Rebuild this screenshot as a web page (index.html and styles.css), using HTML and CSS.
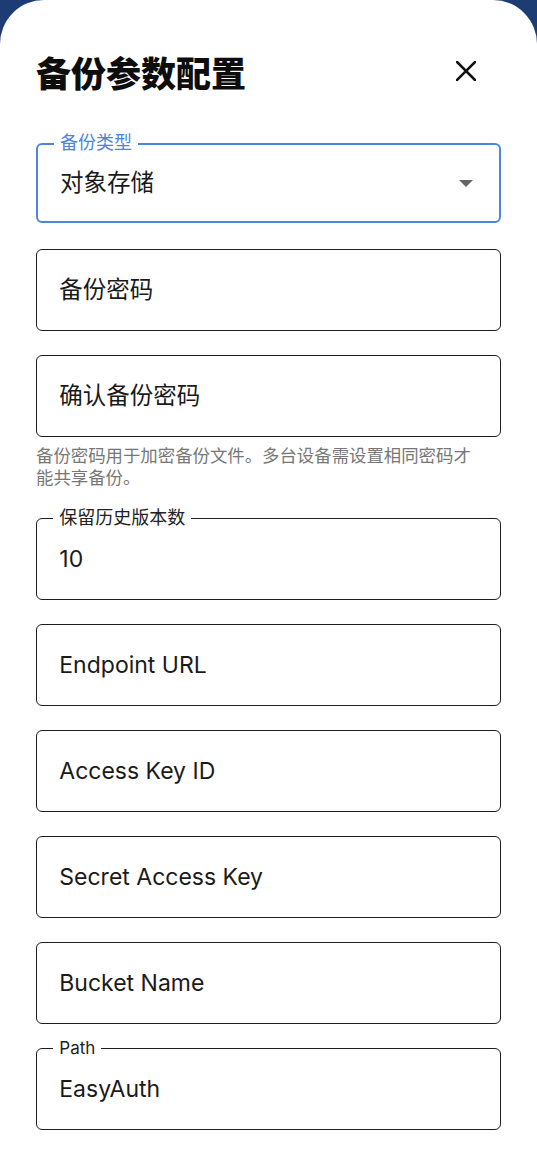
FILE: index.html
```html
<!DOCTYPE html>
<html lang="zh-CN">
<head>
<meta charset="utf-8">
<title>备份参数配置</title>
<link rel="stylesheet" href="styles.css">
</head>
<body>
<div class="sheet">
  <div class="header">
    <h1 class="title">备份参数配置</h1>
    <button class="close" aria-label="关闭">
      <svg viewBox="0 0 20 20" width="20" height="20"><path d="M1 1 L19 19 M19 1 L1 19" stroke="#111" stroke-width="2.5" stroke-linecap="square" fill="none"/></svg>
    </button>
  </div>
  <div class="form">
    <div class="field focused">
      <span class="label zh">备份类型</span>
      <span class="value zh">对象存储</span>
      <span class="caret"></span>
    </div>
    <div class="field">
      <span class="placeholder zh">备份密码</span>
    </div>
    <div class="group">
      <div class="field">
        <span class="placeholder zh">确认备份密码</span>
      </div>
      <p class="helper">备份密码用于加密备份文件。多台设备需设置相同密码才能共享备份。</p>
    </div>
    <div class="field">
      <span class="label zh">保留历史版本数</span>
      <span class="value">10</span>
    </div>
    <div class="field">
      <span class="placeholder">Endpoint URL</span>
    </div>
    <div class="field">
      <span class="placeholder">Access Key ID</span>
    </div>
    <div class="field">
      <span class="placeholder">Secret Access Key</span>
    </div>
    <div class="field">
      <span class="placeholder">Bucket Name</span>
    </div>
    <div class="field">
      <span class="label">Path</span>
      <span class="value">EasyAuth</span>
    </div>
  </div>
</div>
</body>
</html>
```
FILE: styles.css
```css
html, body {
  margin: 0;
  padding: 0;
  background: #1d3c74;
}
body {
  font-family: Inter, "Noto Sans CJK SC", sans-serif;
  color: #1a1a1a;
}
.sheet {
  background: #fff;
  border-radius: 44px 44px 0 0;
  min-height: 1169px;
  box-sizing: border-box;
  padding: 36px 36px 0 36px;
}
.header {
  height: 70px;
  display: flex;
  align-items: center;
  justify-content: space-between;
}
.title {
  margin: 0;
  font-family: "Noto Sans CJK SC", sans-serif;
  font-size: 35px;
  line-height: 1;
  font-weight: 900;
  color: #0d0d0d;
}
.close {
  border: 0;
  background: none;
  padding: 0;
  margin-right: 25px;
  width: 20px;
  height: 20px;
  display: flex;
}
.form {
  margin-top: 37px;
  display: flex;
  flex-direction: column;
  gap: 24px;
}
.group {
  display: flex;
  flex-direction: column;
}
.field {
  position: relative;
  box-sizing: border-box;
  height: 82px;
  border: 1.7px solid #1e1e1e;
  border-radius: 6px;
  display: flex;
  align-items: center;
  padding: 0 23px 0 22.3px;
}
.field.focused {
  height: 80px;
  border: 2px solid #4a86e0;
  padding-left: 22px;
}
.group + .field {
  margin-top: 0;
}
.label {
  position: absolute;
  top: -11px;
  left: 16.3px;
  padding: 0 6px;
  background: #fff;
  font-size: 17px;
  line-height: 20px;
  color: #222;
}
.label.zh {
  font-size: 18px;
}
.focused .label {
  left: 16px;
  top: -12px;
  color: #4a86e0;
}
.focused + .field {
  margin-top: 2px;
}
.value, .placeholder {
  font-size: 23px;
  line-height: 28px;
  color: #1a1a1a;
}
.value.zh, .placeholder.zh {
  font-size: 23.5px;
}
.caret {
  margin-left: auto;
  margin-right: 3px;
  width: 0;
  height: 0;
  border-left: 7.5px solid transparent;
  border-right: 7.5px solid transparent;
  border-top: 7.5px solid #666;
}
.helper {
  margin: 8px 20px 5px 0;
  font-size: 17.4px;
  line-height: 22px;
  color: #777;
}
```
